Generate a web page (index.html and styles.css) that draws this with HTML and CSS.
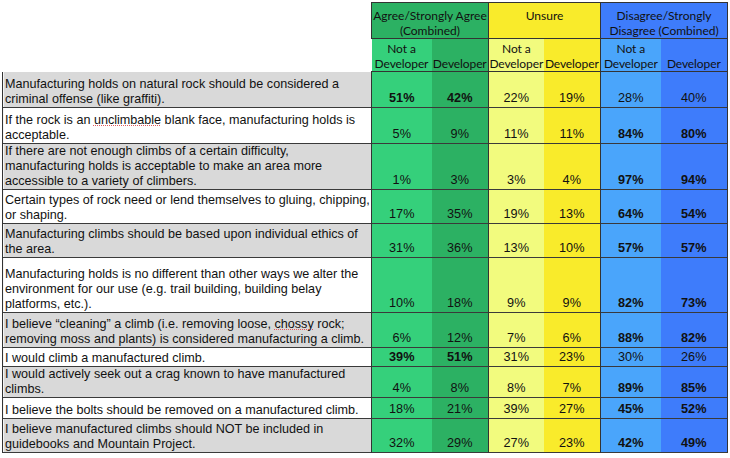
FILE: index.html
```html
<!DOCTYPE html>
<html lang="en">
<head>
<meta charset="utf-8">
<title>Manufactured climbs survey</title>
<link rel="stylesheet" href="styles.css">
</head>
<body>
<table class="survey">
  <colgroup>
    <col class="col-label">
    <col class="col-a1"><col class="col-a2">
    <col class="col-u1"><col class="col-u2">
    <col class="col-d1"><col class="col-d2">
  </colgroup>
  <thead>
    <tr class="head-top">
      <th class="blank" rowspan="2"></th>
      <th colspan="2" class="grp agree-dark">Agree/Strongly Agree<br>(Combined)</th>
      <th colspan="2" class="grp unsure-dark">Unsure</th>
      <th colspan="2" class="grp dis-dark">Disagree/Strongly<br>Disagree (Combined)</th>
    </tr>
    <tr class="head-sub">
      <th class="sub agree-light">Not a<br>Developer</th>
      <th class="sub agree-dark grp-end">Developer</th>
      <th class="sub unsure-light">Not a<br>Developer</th>
      <th class="sub unsure-dark grp-end">Developer</th>
      <th class="sub dis-light">Not a<br>Developer</th>
      <th class="sub dis-dark">Developer</th>
    </tr>
  </thead>
  <tbody>
    <tr class="gray h36">
      <td class="label">Manufacturing holds on natural rock should be considered a<br>criminal offense (like graffiti).</td>
      <td class="v agree-light b">51%</td><td class="v agree-dark grp-end b">42%</td>
      <td class="v unsure-light">22%</td><td class="v unsure-dark grp-end">19%</td>
      <td class="v dis-light">28%</td><td class="v dis-dark">40%</td>
    </tr>
    <tr class="white h36">
      <td class="label">If the rock is an <span class="spell">unclimbable</span> blank face, manufacturing holds is<br>acceptable.</td>
      <td class="v agree-light">5%</td><td class="v agree-dark grp-end">9%</td>
      <td class="v unsure-light">11%</td><td class="v unsure-dark grp-end">11%</td>
      <td class="v dis-light b">84%</td><td class="v dis-dark b">80%</td>
    </tr>
    <tr class="gray h46">
      <td class="label">If there are not enough climbs of a certain difficulty,<br>manufacturing holds is acceptable to make an area more<br>accessible to a variety of climbers.</td>
      <td class="v agree-light">1%</td><td class="v agree-dark grp-end">3%</td>
      <td class="v unsure-light">3%</td><td class="v unsure-dark grp-end">4%</td>
      <td class="v dis-light b">97%</td><td class="v dis-dark b">94%</td>
    </tr>
    <tr class="white h34">
      <td class="label">Certain types of rock need or lend themselves to gluing, chipping,<br>or shaping.</td>
      <td class="v agree-light">17%</td><td class="v agree-dark grp-end">35%</td>
      <td class="v unsure-light">19%</td><td class="v unsure-dark grp-end">13%</td>
      <td class="v dis-light b">64%</td><td class="v dis-dark b">54%</td>
    </tr>
    <tr class="gray h34">
      <td class="label">Manufacturing climbs should be based upon individual ethics of<br>the area.</td>
      <td class="v agree-light">31%</td><td class="v agree-dark grp-end">36%</td>
      <td class="v unsure-light">13%</td><td class="v unsure-dark grp-end">10%</td>
      <td class="v dis-light b">57%</td><td class="v dis-dark b">57%</td>
    </tr>
    <tr class="white h55">
      <td class="label">Manufacturing holds is no different than other ways we alter the<br>environment for our use (e.g. trail building, building belay<br>platforms, etc.).</td>
      <td class="v agree-light">10%</td><td class="v agree-dark grp-end">18%</td>
      <td class="v unsure-light">9%</td><td class="v unsure-dark grp-end">9%</td>
      <td class="v dis-light b">82%</td><td class="v dis-dark b">73%</td>
    </tr>
    <tr class="gray h35">
      <td class="label">I believe “cleaning” a climb (i.e. removing loose, <span class="spell">chossy</span> rock;<br>removing moss and plants) is considered manufacturing a climb.</td>
      <td class="v agree-light">6%</td><td class="v agree-dark grp-end">12%</td>
      <td class="v unsure-light">7%</td><td class="v unsure-dark grp-end">6%</td>
      <td class="v dis-light b">88%</td><td class="v dis-dark b">82%</td>
    </tr>
    <tr class="white h19">
      <td class="label">I would climb a manufactured climb.</td>
      <td class="v agree-light b">39%</td><td class="v agree-dark grp-end b">51%</td>
      <td class="v unsure-light">31%</td><td class="v unsure-dark grp-end">23%</td>
      <td class="v dis-light">30%</td><td class="v dis-dark">26%</td>
    </tr>
    <tr class="gray h31">
      <td class="label">I would actively seek out a crag known to have manufactured<br>climbs.</td>
      <td class="v agree-light">4%</td><td class="v agree-dark grp-end">8%</td>
      <td class="v unsure-light">8%</td><td class="v unsure-dark grp-end">7%</td>
      <td class="v dis-light b">89%</td><td class="v dis-dark b">85%</td>
    </tr>
    <tr class="white h21">
      <td class="label">I believe the bolts should be removed on a manufactured climb.</td>
      <td class="v agree-light">18%</td><td class="v agree-dark grp-end">21%</td>
      <td class="v unsure-light">39%</td><td class="v unsure-dark grp-end">27%</td>
      <td class="v dis-light b">45%</td><td class="v dis-dark b">52%</td>
    </tr>
    <tr class="gray h34">
      <td class="label">I believe manufactured climbs should NOT be included in<br>guidebooks and Mountain Project.</td>
      <td class="v agree-light">32%</td><td class="v agree-dark grp-end">29%</td>
      <td class="v unsure-light">27%</td><td class="v unsure-dark grp-end">23%</td>
      <td class="v dis-light b">42%</td><td class="v dis-dark b">49%</td>
    </tr>
  </tbody>
</table>
</body>
</html>
```
FILE: styles.css
```css
html, body {
  margin: 0;
  padding: 0;
  background: #ffffff;
}

body {
  padding: 2px 0 0 2px;
}

.survey {
  border-collapse: collapse;
  table-layout: fixed;
  width: 725px;
  font-family: "Liberation Sans", Arial, Helvetica, sans-serif;
  color: #111;
}

.col-label { width: 369px; }
.col-a1 { width: 60px; }
.col-a2 { width: 57px; }
.col-u1 { width: 55px; }
.col-u2 { width: 57px; }
.col-d1 { width: 60px; }
.col-d2 { width: 67px; }

th, td {
  padding: 0;
}

.blank {
  background: #fff;
  border: none;
}

.head-top { height: 35px; }
.head-sub { height: 33px; }

.grp {
  font-family: Lato, "Open Sans", sans-serif;
  font-weight: 400;
  font-size: 12px;
  line-height: 15px;
  vertical-align: top;
  text-align: center;
  padding-top: 5px;
  border: 1px solid #333;
  white-space: nowrap;
}

.sub {
  font-family: Lato, "Open Sans", sans-serif;
  font-weight: 400;
  font-size: 12px;
  line-height: 15px;
  vertical-align: bottom;
  text-align: center;
  padding-bottom: 0;
  border-bottom: 1px solid #333;
  white-space: nowrap;
  letter-spacing: -0.1px;
}

.head-sub .sub:last-child { border-right: 1px solid #333; }

.agree-light { background: #35d07b; }
.agree-dark { background: #2cb163; }
.unsure-light { background: #f2fb7e; }
.unsure-dark { background: #f9eb2b; }
.dis-light { background: #4aa5fb; }
.dis-dark { background: #3e7cfb; }

.grp-end { border-right: 1px solid #333; }

.gray { background: #d9d9d9; }
.white { background: #ffffff; }

tbody tr {
  border-bottom: 1px solid #3a3a3a;
}

.label {
  font-size: 12.6px;
  line-height: 15px;
  vertical-align: bottom;
  padding: 0 0 0 2px;
  border-left: 1px solid #333;
  border-right: 1px solid #333;
  box-shadow: inset 1px 0 0 #f4f4f4;
  white-space: nowrap;
  overflow: hidden;
}

.v {
  font-size: 12.7px;
  line-height: 15px;
  text-align: center;
  vertical-align: bottom;
  padding-bottom: 1px;
}

tbody td.dis-dark { border-right: 1px solid #333; }

.b { font-weight: 700; }

.spell {
  text-decoration: underline dotted #e05a5a;
  text-decoration-thickness: 1px;
  text-underline-offset: 1px;
}

.h19 { height: 19px; }
.h21 { height: 21px; }
.h31 { height: 31px; }
.h34 { height: 34px; }
.h35 { height: 35px; }
.h36 { height: 36px; }
.h46 { height: 46px; }
.h55 { height: 55px; }
```
